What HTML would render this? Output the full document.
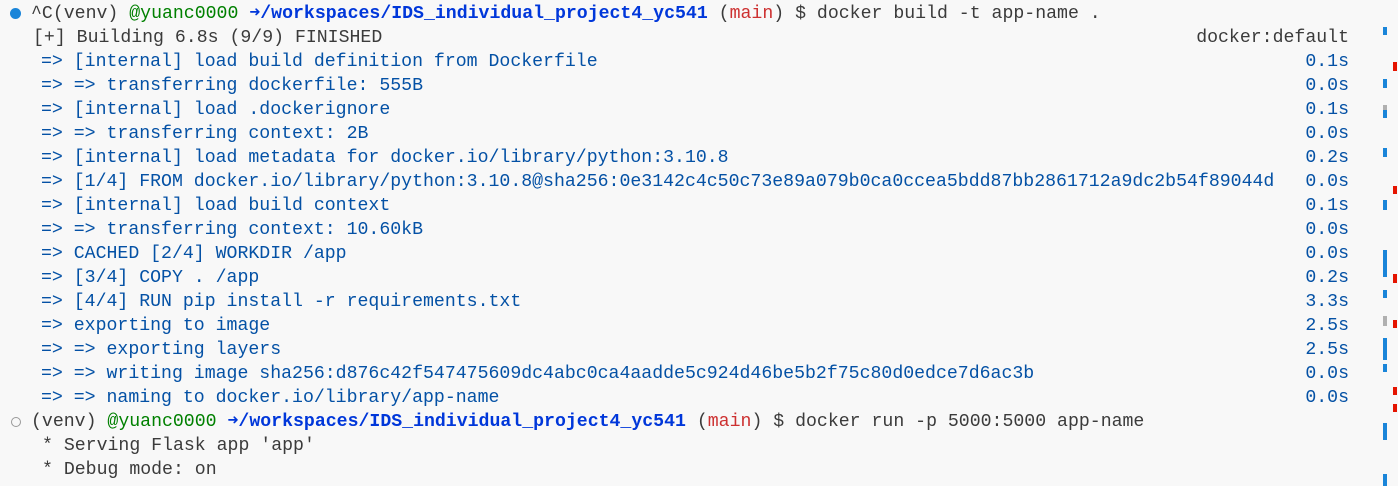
<!DOCTYPE html>
<html><head><meta charset="utf-8"><style>
html,body{margin:0;padding:0;background:#f8f8f8;width:1398px;height:486px;overflow:hidden}
.l{position:absolute;white-space:pre;font-family:"Liberation Mono",monospace;font-size:18.2px;line-height:24px;height:24px;color:#3b3b3b}
.b{color:#0451a5}
.g{color:#008000}
.p{color:#0037da;font-weight:bold}
.r{color:#cd3131}
.t{position:absolute;right:49px;font-family:"Liberation Mono",monospace;font-size:18.2px;line-height:24px;color:#0451a5;white-space:pre}
.m{position:absolute;width:4px}
</style></head><body>
<div style="position:absolute;left:10px;top:8px;width:11px;height:11px;border-radius:50%;background:#1a85d9"></div>
<div style="position:absolute;left:11px;top:417px;width:8px;height:8px;border-radius:50%;border:1px solid #999"></div>
<div class="l" style="left:31px;top:2px">^C(venv) <span class="g">@yuanc0000</span> <span class="p">➜/workspaces/IDS_individual_project4_yc541</span> (<span class="r">main</span>) $ docker build -t app-name .</div>
<div class="l" style="left:33px;top:26px">[+] Building 6.8s (9/9) FINISHED</div>
<div class="l" style="right:49px;top:26px">docker:default</div>
<div class="l b" style="left:41px;top:50px">=> [internal] load build definition from Dockerfile</div>
<div class="l b" style="left:41px;top:74px">=> => transferring dockerfile: 555B</div>
<div class="l b" style="left:41px;top:98px">=> [internal] load .dockerignore</div>
<div class="l b" style="left:41px;top:122px">=> => transferring context: 2B</div>
<div class="l b" style="left:41px;top:146px">=> [internal] load metadata for docker.io/library/python:3.10.8</div>
<div class="l b" style="left:41px;top:170px">=> [1/4] FROM docker.io/library/python:3.10.8@sha256:0e3142c4c50c73e89a079b0ca0ccea5bdd87bb2861712a9dc2b54f89044d</div>
<div class="l b" style="left:41px;top:194px">=> [internal] load build context</div>
<div class="l b" style="left:41px;top:218px">=> => transferring context: 10.60kB</div>
<div class="l b" style="left:41px;top:242px">=> CACHED [2/4] WORKDIR /app</div>
<div class="l b" style="left:41px;top:266px">=> [3/4] COPY . /app</div>
<div class="l b" style="left:41px;top:290px">=> [4/4] RUN pip install -r requirements.txt</div>
<div class="l b" style="left:41px;top:314px">=> exporting to image</div>
<div class="l b" style="left:41px;top:338px">=> => exporting layers</div>
<div class="l b" style="left:41px;top:362px">=> => writing image sha256:d876c42f547475609dc4abc0ca4aadde5c924d46be5b2f75c80d0edce7d6ac3b</div>
<div class="l b" style="left:41px;top:386px">=> => naming to docker.io/library/app-name</div>
<div class="t" style="top:50px">0.1s</div>
<div class="t" style="top:74px">0.0s</div>
<div class="t" style="top:98px">0.1s</div>
<div class="t" style="top:122px">0.0s</div>
<div class="t" style="top:146px">0.2s</div>
<div class="t" style="top:170px">0.0s</div>
<div class="t" style="top:194px">0.1s</div>
<div class="t" style="top:218px">0.0s</div>
<div class="t" style="top:242px">0.0s</div>
<div class="t" style="top:266px">0.2s</div>
<div class="t" style="top:290px">3.3s</div>
<div class="t" style="top:314px">2.5s</div>
<div class="t" style="top:338px">2.5s</div>
<div class="t" style="top:362px">0.0s</div>
<div class="t" style="top:386px">0.0s</div>
<div class="l" style="left:31px;top:410px">(venv) <span class="g">@yuanc0000</span> <span class="p">➜/workspaces/IDS_individual_project4_yc541</span> (<span class="r">main</span>) $ docker run -p 5000:5000 app-name</div>
<div class="l" style="left:42px;top:434px">* Serving Flask app 'app'</div>
<div class="l" style="left:42px;top:458px">* Debug mode: on</div>
<div class="m" style="left:1383px;top:27px;height:8px;background:#1a85d9"></div>
<div class="m" style="left:1383px;top:79px;height:9px;background:#1a85d9"></div>
<div class="m" style="left:1383px;top:105px;height:5px;background:#b0b0b0"></div>
<div class="m" style="left:1383px;top:110px;height:8px;background:#1a85d9"></div>
<div class="m" style="left:1383px;top:148px;height:9px;background:#1a85d9"></div>
<div class="m" style="left:1383px;top:200px;height:10px;background:#1a85d9"></div>
<div class="m" style="left:1383px;top:250px;height:27px;background:#1a85d9"></div>
<div class="m" style="left:1383px;top:290px;height:8px;background:#1a85d9"></div>
<div class="m" style="left:1383px;top:316px;height:10px;background:#b0b0b0"></div>
<div class="m" style="left:1383px;top:338px;height:22px;background:#1a85d9"></div>
<div class="m" style="left:1383px;top:364px;height:8px;background:#1a85d9"></div>
<div class="m" style="left:1383px;top:423px;height:17px;background:#1a85d9"></div>
<div class="m" style="left:1383px;top:474px;height:12px;background:#1a85d9"></div>
<div class="m" style="left:1393px;top:62px;height:9px;background:#e51400"></div>
<div class="m" style="left:1393px;top:186px;height:8px;background:#e51400"></div>
<div class="m" style="left:1393px;top:274px;height:9px;background:#e51400"></div>
<div class="m" style="left:1393px;top:320px;height:8px;background:#e51400"></div>
<div class="m" style="left:1393px;top:387px;height:8px;background:#e51400"></div>
<div class="m" style="left:1393px;top:404px;height:8px;background:#e51400"></div>
</body></html>
